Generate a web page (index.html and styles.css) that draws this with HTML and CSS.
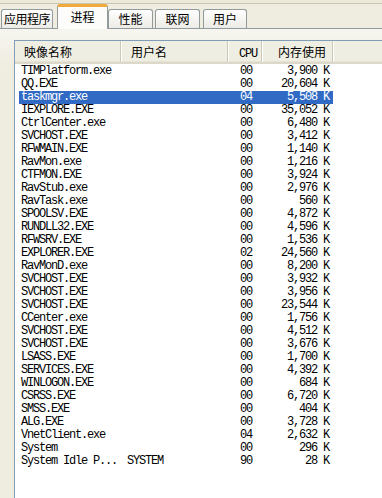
FILE: index.html
```html
<!DOCTYPE html>
<html lang="zh-CN">
<head>
    <meta charset="UTF-8">
    <meta name="viewport" content="width=device-width, initial-scale=1.0">
    <title>Windows 任务管理器</title>
    <link rel="stylesheet" href="styles.css">
</head>
<body>
    <div class="topbar"></div>
    <div class="tabs">
        <div class="tab tab-apps">应用程序</div>
        <div class="tab tab-active">进程</div>
        <div class="tab tab-perf">性能</div>
        <div class="tab tab-net">联网</div>
        <div class="tab tab-users">用户</div>
    </div>
    <div class="panel">
        <div class="list">
            <div class="list-header">
                <div class="hcell hcell-name">映像名称</div>
                <div class="hcell hcell-user">用户名</div>
                <div class="hcell hcell-cpu"><span class="mono">CPU</span></div>
                <div class="hcell hcell-mem">内存使用</div>
                <div class="hcell hcell-rest"></div>
            </div>
            <div class="rows">
                <div class="row"><span>TIMPlatform.exe</span><span></span><span>00</span><span>3,900 K</span></div>
                <div class="row"><span>QQ.EXE</span><span></span><span>00</span><span>20,604 K</span></div>
                <div class="row selected"><span>taskmgr.exe</span><span></span><span>04</span><span>5,508 K</span></div>
                <div class="row"><span>IEXPLORE.EXE</span><span></span><span>00</span><span>35,052 K</span></div>
                <div class="row"><span>CtrlCenter.exe</span><span></span><span>00</span><span>6,480 K</span></div>
                <div class="row"><span>SVCHOST.EXE</span><span></span><span>00</span><span>3,412 K</span></div>
                <div class="row"><span>RFWMAIN.EXE</span><span></span><span>00</span><span>1,140 K</span></div>
                <div class="row"><span>RavMon.exe</span><span></span><span>00</span><span>1,216 K</span></div>
                <div class="row"><span>CTFMON.EXE</span><span></span><span>00</span><span>3,924 K</span></div>
                <div class="row"><span>RavStub.exe</span><span></span><span>00</span><span>2,976 K</span></div>
                <div class="row"><span>RavTask.exe</span><span></span><span>00</span><span>560 K</span></div>
                <div class="row"><span>SPOOLSV.EXE</span><span></span><span>00</span><span>4,872 K</span></div>
                <div class="row"><span>RUNDLL32.EXE</span><span></span><span>00</span><span>4,596 K</span></div>
                <div class="row"><span>RFWSRV.EXE</span><span></span><span>00</span><span>1,536 K</span></div>
                <div class="row"><span>EXPLORER.EXE</span><span></span><span>02</span><span>24,560 K</span></div>
                <div class="row"><span>RavMonD.exe</span><span></span><span>00</span><span>8,200 K</span></div>
                <div class="row"><span>SVCHOST.EXE</span><span></span><span>00</span><span>3,932 K</span></div>
                <div class="row"><span>SVCHOST.EXE</span><span></span><span>00</span><span>3,956 K</span></div>
                <div class="row"><span>SVCHOST.EXE</span><span></span><span>00</span><span>23,544 K</span></div>
                <div class="row"><span>CCenter.exe</span><span></span><span>00</span><span>1,756 K</span></div>
                <div class="row"><span>SVCHOST.EXE</span><span></span><span>00</span><span>4,512 K</span></div>
                <div class="row"><span>SVCHOST.EXE</span><span></span><span>00</span><span>3,676 K</span></div>
                <div class="row"><span>LSASS.EXE</span><span></span><span>00</span><span>1,700 K</span></div>
                <div class="row"><span>SERVICES.EXE</span><span></span><span>00</span><span>4,392 K</span></div>
                <div class="row"><span>WINLOGON.EXE</span><span></span><span>00</span><span>684 K</span></div>
                <div class="row"><span>CSRSS.EXE</span><span></span><span>00</span><span>6,720 K</span></div>
                <div class="row"><span>SMSS.EXE</span><span></span><span>00</span><span>404 K</span></div>
                <div class="row"><span>ALG.EXE</span><span></span><span>00</span><span>3,728 K</span></div>
                <div class="row"><span>VnetClient.exe</span><span></span><span>04</span><span>2,632 K</span></div>
                <div class="row"><span>System</span><span></span><span>00</span><span>296 K</span></div>
                <div class="row"><span>System Idle P...</span><span>SYSTEM</span><span>90</span><span>28 K</span></div>
            </div>
        </div>
    </div>
</body>
</html>
```

FILE: styles.css
```css
html, body {
    margin: 0;
    width: 382px;
    height: 498px;
    overflow: hidden;
}
body {
    background: #efece0;
    font-family: 'Noto Sans CJK SC', sans-serif;
    font-size: 12px;
    color: #000;
}
.topbar {
    height: 3px;
    background: #ece9d8;
    border-bottom: 1px solid #c9c6b6;
}
.tabs {
    display: flex;
    align-items: flex-end;
    height: 24px;
    padding-left: 1px;
    border-bottom: 1px solid #919b9c;
    background: #efece0;
}
.tab {
    box-sizing: border-box;
    height: 19px;
    margin-right: 2px;
    border: 1px solid #919b9c;
    border-bottom: none;
    border-radius: 3px 3px 0 0;
    background: linear-gradient(#ffffff, #ecebe5);
    line-height: 18px;
    text-align: center;
    white-space: nowrap;
}
.tab-apps {
    width: 52px;
    margin-right: 4px;
    letter-spacing: -0.5px;
}
.tab-active {
    width: 51px;
    height: 25px;
    margin-right: 0;
    margin-bottom: -1px;
    border-top: 3px solid #f2a93b;
    background: #fcfcfa;
    line-height: 19px;
    position: relative;
}
.tab-perf {
    width: 45px;
}
.tab-net {
    width: 45px;
    margin-right: 3px;
}
.tab-users {
    width: 44px;
}
.panel {
    padding: 11px 0 0 14px;
    height: 470px;
    box-sizing: border-box;
    background: linear-gradient(#f6f5ef, #efece0 40px);
}
.list {
    height: 100%;
    border-left: 1px solid #7f9db9;
    border-top: 1px solid #7f9db9;
    background: #fff;
}
.list-header {
    display: flex;
    height: 23px;
    box-sizing: border-box;
    background: #efeee3;
    border-bottom: 2px solid #dcd9ca;
    box-shadow: inset 0 -1px 0 #e6e3d6;
}
.hcell {
    box-sizing: border-box;
    height: 100%;
    line-height: 21px;
    border-right: 1px solid #cbc8b8;
    box-shadow: 1px 0 0 #fff;
    white-space: nowrap;
}
.hcell-name {
    width: 106px;
    padding-left: 9px;
}
.hcell-user {
    width: 107px;
    padding-left: 10px;
}
.hcell-cpu {
    width: 34px;
    padding-left: 11px;
}
.hcell-mem {
    width: 71px;
    padding-left: 16px;
}
.hcell-rest {
    flex: 1;
    border-right: none;
    box-shadow: none;
}
.mono {
    font-family: 'Liberation Mono', monospace;
    font-size: 12px;
    letter-spacing: -1.2px;
}
.rows {
    padding: 1px 0 0 4px;
    font-family: 'Liberation Mono', monospace;
    font-size: 12px;
    letter-spacing: -1.2px;
}
.row {
    display: grid;
    grid-template-columns: 102px 107px 34px 71px;
    width: 314px;
    height: 13px;
    line-height: 13px;
    white-space: nowrap;
}
.row span:nth-child(1) {
    padding-left: 2px;
}
.row span:nth-child(2) {
    padding-left: 6px;
}
.row span:nth-child(3) {
    padding-left: 12px;
}
.row span:nth-child(4) {
    text-align: right;
    padding-right: 4px;
}
.row.selected {
    background: #316ac5;
    color: #fff;
}
```
